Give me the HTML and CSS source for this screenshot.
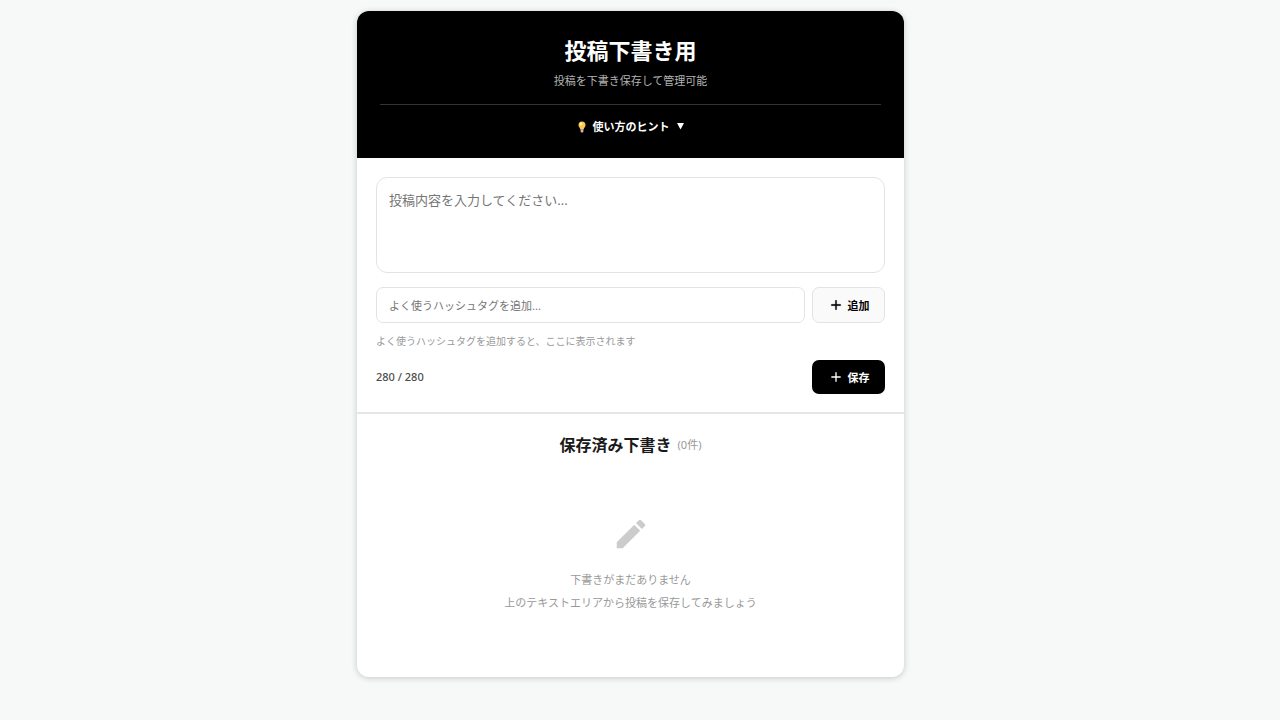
FILE: index.html
```html
<!DOCTYPE html>
<html lang="ja">
<head>
    <meta charset="UTF-8">
    <meta name="viewport" content="width=device-width, initial-scale=1.0">
    <title>投稿下書き用</title>
    <link rel="stylesheet" href="styles.css">
</head>
<body>

    <div class="container">
        <!-- ヘッダー -->
        <header class="header">
            <h1>投稿下書き用</h1>
            <p class="subtitle">投稿を下書き保存して管理可能</p>
            <div class="tips">
                <button type="button" class="tips-toggle">
                    <svg class="bulb" viewBox="0 0 8 12" aria-hidden="true">
                        <path d="M4 .5A3.500 3.500 0 0 0 .5 4c0 2 1.500 2.600 1.900 4.600h3.200C6 6.600 7.500 6 7.500 4A3.500 3.500 0 0 0 4 .5z" fill="#fcc950"/>
                        <circle cx="3" cy="2.900" r="1.300" fill="#fff3b5"/>
                        <path d="M2.600 8.300h2.800v2.400l-.7.8H3.300l-.7-.8z" fill="#c9b3b8"/>
                    </svg>
                    <span>使い方のヒント</span>
                    <svg class="arrow" viewBox="0 0 7 8" aria-hidden="true"><path d="M0 0h7L3.500 6.500z" fill="currentColor"/></svg>
                </button>
            </div>
        </header>

        <!-- 投稿フォーム -->
        <form class="post-form" id="post-form">
            <textarea id="post-text" aria-label="投稿内容" placeholder="投稿内容を入力してください..."></textarea>
            <div class="tag-row">
                <input type="text" id="tag-input" aria-label="ハッシュタグ" placeholder="よく使うハッシュタグを追加...">
                <button type="button" class="btn btn-add">
                    <svg viewBox="0 0 24 24" aria-hidden="true"><path d="M19 13h-6v6h-2v-6H5v-2h6V5h2v6h6z" fill="currentColor" stroke="currentColor" stroke-width="0.4"/></svg>
                    追加
                </button>
            </div>
            <p class="tag-empty">よく使うハッシュタグを追加すると、ここに表示されます</p>
            <div class="form-footer">
                <span class="counter">280 / 280</span>
                <button type="submit" class="btn btn-save">
                    <svg viewBox="0 0 24 24" aria-hidden="true"><path d="M19 13h-6v6h-2v-6H5v-2h6V5h2v6h6z" fill="currentColor"/></svg>
                    保存
                </button>
            </div>
        </form>

        <!-- 保存済み下書き -->
        <section class="drafts">
            <h2>保存済み下書き <span class="draft-count">(0件)</span></h2>
            <div class="empty-state">
                <svg viewBox="0 0 24 24" aria-hidden="true">
                    <path d="M3 17.250V21h3.750L17.810 9.940l-3.750-3.750L3 17.250zM20.710 7.040a1 1 0 0 0 0-1.410l-2.340-2.340a1 1 0 0 0-1.410 0l-1.830 1.830 3.750 3.750 1.830-1.830z" fill="currentColor"/>
                </svg>
                <p>下書きがまだありません</p>
                <p>上のテキストエリアから投稿を保存してみましょう</p>
            </div>
        </section>
    </div>

    <script>
        const postForm = document.getElementById('post-form');
        const postText = document.getElementById('post-text');
        const counter = document.querySelector('.counter');

        postForm.addEventListener('submit', function(event) {
            event.preventDefault();
        });

        postText.addEventListener('input', function() {
            counter.textContent = `${280 - postText.value.length} / 280`;
        });
    </script>

</body>
</html>
```
FILE: styles.css
```css
* {
    margin: 0;
    padding: 0;
    box-sizing: border-box;
    font-family: "Noto Sans", "Noto Sans CJK JP", sans-serif;
}

body {
    min-height: 100vh;
    padding: 11px 19px 11px 0;
    background: #f7f9f9;
    color: #1a1a1a;
    font-size: 11px;
    line-height: 18px;
}

.container {
    width: 100%;
    max-width: 547px;
    margin: 0 auto;
    background: #fff;
    border-radius: 12px;
    box-shadow: 0 1px 6px rgba(0, 0, 0, 0.2);
    overflow: hidden;
}

.header {
    padding: 24px 23px 22px;
    background: #000;
    color: #fff;
    text-align: center;
}

.header h1 {
    font-size: 22px;
    font-weight: 700;
    line-height: 30px;
}

.subtitle {
    margin-top: 7px;
    color: #b3b3b3;
}

.tips {
    margin-top: 14px;
    padding-top: 13px;
    border-top: 1px solid #333;
}

.tips-toggle {
    display: inline-flex;
    align-items: center;
    gap: 7px;
    border: none;
    background: transparent;
    color: #fff;
    font-size: 11px;
    font-weight: 600;
    line-height: 18px;
    vertical-align: top;
    cursor: pointer;
}

.bulb {
    width: 8px;
    height: 12px;
}

.arrow {
    width: 7px;
    height: 8px;
}

.post-form {
    padding: 19px 19px 18px;
    border-bottom: 2px solid #e6e6e6;
}

.post-form textarea,
.post-form input {
    display: block;
    width: 100%;
    padding: 0 12px;
    border: 1px solid #e1e4e6;
    border-radius: 7px;
    background: #fff;
    color: #1a1a1a;
    font-size: 11px;
    outline: none;
}

.post-form textarea {
    height: 96px;
    padding: 12px;
    border-radius: 11px;
    font-size: 13px;
    line-height: 20px;
    resize: none;
}

.post-form textarea:focus,
.post-form input:focus {
    border-color: #000;
}

.tag-row {
    display: flex;
    gap: 7px;
    margin-top: 14px;
}

.tag-row input {
    flex: 1;
    height: 36px;
}

.btn {
    display: flex;
    align-items: center;
    justify-content: center;
    gap: 4px;
    width: 73px;
    height: 34px;
    border: none;
    border-radius: 7px;
    font-size: 11px;
    font-weight: 600;
    cursor: pointer;
}

.btn svg {
    width: 16px;
    height: 16px;
}

.btn-add {
    height: 36px;
    border: 1px solid #e1e4e6;
    background: #fafafa;
    color: #000;
}

.btn-save {
    background: #000;
    color: #fff;
}

.btn-save:hover {
    background: #333;
}

.tag-empty {
    margin-top: 9px;
    color: #999;
    font-size: 10px;
}

.form-footer {
    display: flex;
    align-items: center;
    justify-content: space-between;
    margin-top: 10px;
}

.counter {
    color: #4d4d4d;
    font-weight: 500;
}

.drafts {
    padding: 19px 19px 65px;
    text-align: center;
}

.drafts h2 {
    display: flex;
    align-items: center;
    justify-content: center;
    gap: 6px;
    font-size: 16px;
    font-weight: 600;
    line-height: 24px;
}

.draft-count {
    color: #999;
    font-size: 11px;
    font-weight: 400;
}

.empty-state {
    padding-top: 58px;
    color: #999;
}

.empty-state svg {
    display: block;
    width: 38px;
    height: 38px;
    margin: 0 auto 18px;
    color: #ccc;
}

.empty-state p + p {
    margin-top: 5px;
}
```
